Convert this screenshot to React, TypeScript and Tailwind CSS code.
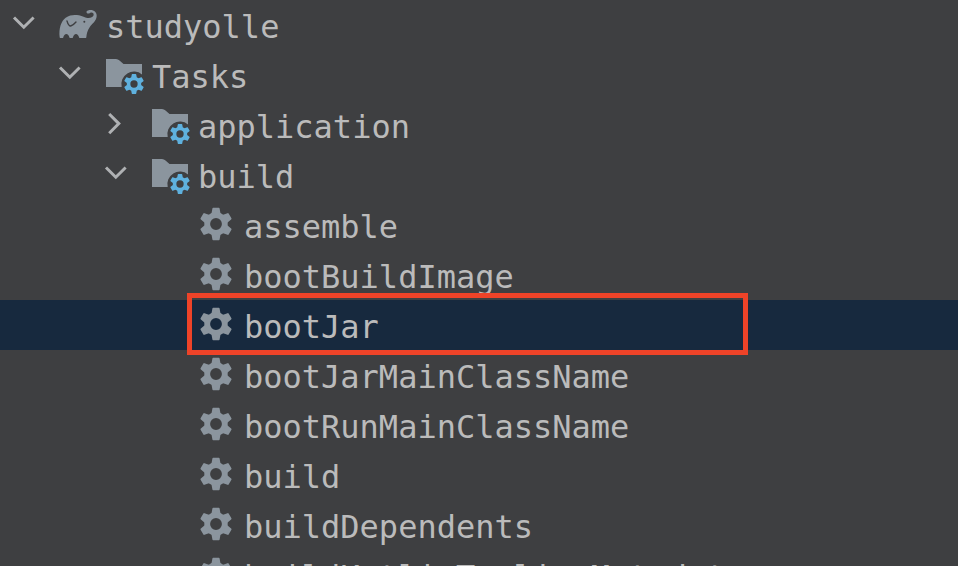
import React, { useState } from 'react';

type IconKind = 'gradle' | 'folder' | 'task';

interface TreeNode {
    name: string;
    icon: IconKind;
    children?: TreeNode[];
}

const PROJECT: TreeNode = {
    name: 'studyolle',
    icon: 'gradle',
    children: [
        {
            name: 'Tasks',
            icon: 'folder',
            children: [
                { name: 'application', icon: 'folder', children: [] },
                {
                    name: 'build',
                    icon: 'folder',
                    children: [
                        { name: 'assemble', icon: 'task' },
                        { name: 'bootBuildImage', icon: 'task' },
                        { name: 'bootJar', icon: 'task' },
                        { name: 'bootJarMainClassName', icon: 'task' },
                        { name: 'bootRunMainClassName', icon: 'task' },
                        { name: 'build', icon: 'task' },
                        { name: 'buildDependents', icon: 'task' },
                        { name: 'buildKotlinToolingMetadata', icon: 'task' },
                    ],
                },
            ],
        },
    ],
};

const ROOT = 'studyolle';
const HIGHLIGHTED = 'studyolle/Tasks/build/bootJar';

const INDENTS = ['pl-1', 'pl-[50px]', 'pl-[96px]', 'pl-[142px]'];

// Gear centred on 0,0 with an outer radius of 16
const GearShape: React.FC = () => (
    <>
        <circle r="8.8" fill="none" stroke="currentColor" strokeWidth="5.8" />
        {[0, 60, 120, 180, 240, 300].map((angle) => (
            <path
                key={angle}
                d="M-4.6 -10 L-3.6 -15.4 Q-3.5 -16.2 -2.8 -16.2 H2.8 Q3.5 -16.2 3.6 -15.4 L4.6 -10 Z"
                fill="currentColor"
                transform={`rotate(${angle})`}
            />
        ))}
    </>
);

const TaskIcon: React.FC = () => (
    <svg viewBox="0 0 40 40" className="size-10 shrink-0 text-[#8b959e]" aria-hidden="true">
        <g transform="translate(20 19)">
            <GearShape />
        </g>
    </svg>
);

const FolderIcon: React.FC = () => (
    <svg viewBox="0 0 40 40" className="size-10 shrink-0" aria-hidden="true">
        <path d="M2 4 H12 Q14 4 15.5 5.5 L19.5 9 H38 V19.4 A12.6 12.6 0 0 0 17.7 32 H2 Z" fill="#8b959e" />
        <g transform="translate(30 29) scale(0.62)" className="text-[#5fb1de]">
            <GearShape />
        </g>
    </svg>
);

const GradleIcon: React.FC = () => (
    <svg viewBox="0 0 120 120" className="size-10 shrink-0" aria-hidden="true">
        <path
            d="M5 97 C2 70 9 49 23 38 C36 29 50 29 63 31 C74 33 80 38 88 39 C99 40 107 35 107 29 C107 23 101 21 96 24 C92 27 88 26 86 23 C84 18 90 15 97 15 C109 15 117 23 116 34 C115 49 103 55 95 67 C88 77 86 87 85 97 Q85 99 83 99 H65 Q63 99 63 97 C62 91 58 87 54 87 C50 87 46 91 45 97 Q45 99 43 99 H36 Q34 99 34 97 C33 91 29 87 25 87 C21 87 17 91 16 97 Q16 99 14 99 H7 Q5 99 5 97 Z"
            fill="#8b959e"
        />
        <path d="M27 48 C30 58 34 63 38 63 C44 61 49 57 54 51" fill="none" stroke="#3e3f41" strokeWidth="4" strokeLinecap="round" />
        <circle cx="79" cy="50" r="3" fill="#3e3f41" />
    </svg>
);

const Chevron: React.FC<{ open: boolean }> = ({ open }) => (
    <svg viewBox="0 0 40 40" className="size-10 shrink-0" aria-hidden="true">
        <path
            d={open ? 'M10 12.5 L19.8 22.2 L29.6 12.5' : 'M13.2 9 L22.8 18.6 L13.2 28.2'}
            fill="none"
            stroke="#afb1b3"
            strokeWidth="3"
        />
    </svg>
);

const ICONS: Record<IconKind, React.FC> = {
    gradle: GradleIcon,
    folder: FolderIcon,
    task: TaskIcon,
};

export default function App() {
    const [selected, setSelected] = useState(HIGHLIGHTED);
    const [open, setOpen] = useState<string[]>([ROOT, `${ROOT}/Tasks`, `${ROOT}/Tasks/build`]);

    const handleClick = (path: string, node: TreeNode) => {
        setSelected(path);
        if (node.children) {
            setOpen((prev) => (prev.includes(path) ? prev.filter((p) => p !== path) : [...prev, path]));
        }
    };

    const renderNode = (node: TreeNode, path: string, level: number): React.ReactNode => {
        const Icon = ICONS[node.icon];
        const isOpen = open.includes(path);

        return (
            <li key={path}>
                <div className={`relative ${path === selected ? 'bg-[#17293e]' : ''}`}>
                    <button
                        type="button"
                        onClick={() => handleClick(path, node)}
                        aria-expanded={node.children ? isOpen : undefined}
                        className={`flex h-[50px] w-full items-center text-left ${INDENTS[level]}`}
                    >
                        {node.children ? <Chevron open={isOpen} /> : <span className="w-10 shrink-0" />}
                        <span className="ml-3.5 flex items-center gap-2">
                            <Icon />
                            <span className="whitespace-nowrap pt-1">{node.name}</span>
                        </span>
                    </button>
                    {path === HIGHLIGHTED && (
                        <div className="pointer-events-none absolute -top-[7px] -bottom-[5px] left-[187px] right-[210px] z-10 border-5 border-[#ee4328]" />
                    )}
                </div>
                {isOpen && node.children && (
                    <ul>{node.children.map((child) => renderNode(child, `${path}/${child.name}`, level + 1))}</ul>
                )}
            </li>
        );
    };

    return (
        <main className="h-screen overflow-hidden bg-[#3e3f41] font-['DejaVu_Sans_Mono',monospace] text-[32px] leading-10 text-[#bbbbbb]">
            <ul>{renderNode(PROJECT, ROOT, 0)}</ul>
        </main>
    );
}
